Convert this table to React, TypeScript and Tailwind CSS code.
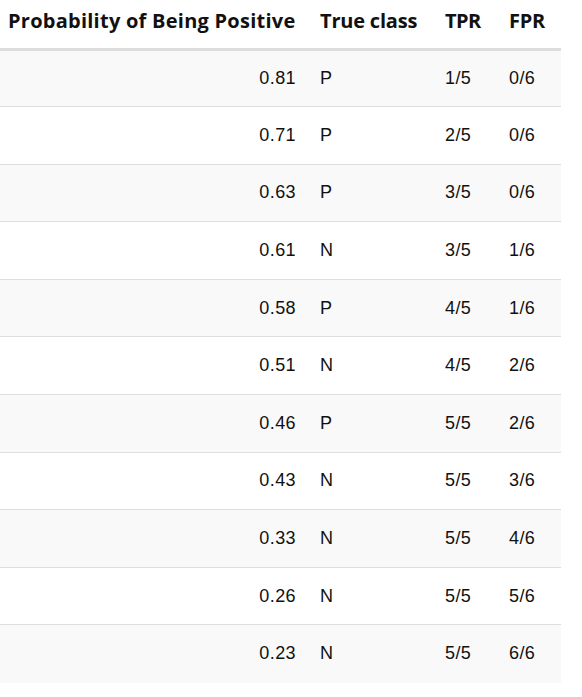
const rows = [
  ["0.81", "P", "1/5", "0/6"],
  ["0.71", "P", "2/5", "0/6"],
  ["0.63", "P", "3/5", "0/6"],
  ["0.61", "N", "3/5", "1/6"],
  ["0.58", "P", "4/5", "1/6"],
  ["0.51", "N", "4/5", "2/6"],
  ["0.46", "P", "5/5", "2/6"],
  ["0.43", "N", "5/5", "3/6"],
  ["0.33", "N", "5/5", "4/6"],
  ["0.26", "N", "5/5", "5/6"],
  ["0.23", "N", "5/5", "6/6"],
];

export default function App() {
  return (
    <main className="w-full bg-white text-black">
      <table className="w-[561px] table-fixed border-collapse">
        <colgroup>
          <col className="w-[308px]" />
          <col className="w-[125px]" />
          <col className="w-[64px]" />
          <col className="w-[64px]" />
        </colgroup>
        <thead>
          <tr className="h-[49px] border-b-[3px] border-[#dddddd] font-['Open_Sans',sans-serif] text-[20px] font-bold text-[#111]">
            <th className="pl-2 pr-0 pb-[5px] text-left align-middle tracking-[0.25px] whitespace-nowrap">Probability of Being Positive</th>
            <th className="px-3 pb-[5px] text-left align-middle tracking-[-0.2px] whitespace-nowrap">True class</th>
            <th className="px-3 pb-[5px] text-left align-middle tracking-[-0.6px]">TPR</th>
            <th className="px-3 pb-[5px] text-left align-middle tracking-[-0.3px]">FPR</th>
          </tr>
        </thead>
        <tbody className="font-['Liberation_Sans',Arial,sans-serif] text-[18px] tracking-[0.4px] text-[#111]">
          {rows.map((r, i) => (
            <tr
              key={i}
              className={
                "h-[57.6px] " +
                (i < rows.length - 1 ? "border-b border-[#dddddd] " : "") +
                (i % 2 === 0 ? "bg-[#f9f9f9]" : "bg-white")
              }
            >
              <td className="px-3 text-right">{r[0]}</td>
              <td className="px-3">{r[1]}</td>
              <td className="px-3">{r[2]}</td>
              <td className="px-3">{r[3]}</td>
            </tr>
          ))}
        </tbody>
      </table>
    </main>
  );
}
